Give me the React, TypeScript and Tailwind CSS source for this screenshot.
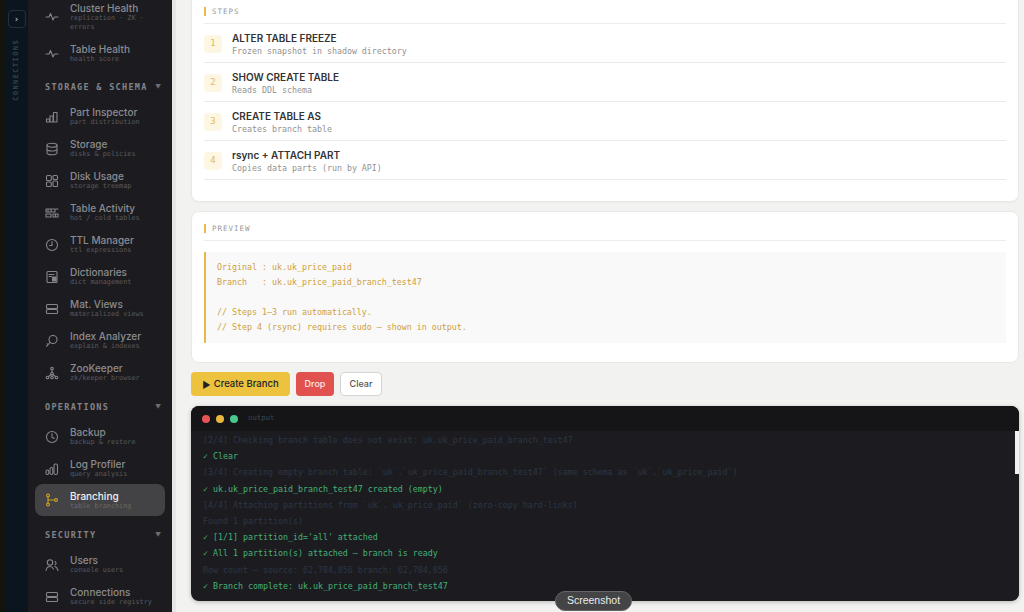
import React from "react";

const sans = "font-['Inter','Noto_Sans',sans-serif]";
const mono = "font-['DejaVu_Sans_Mono','Liberation_Mono',monospace]";

type IconProps = { children: React.ReactNode; color?: string };
function Ico({ children, color = "#85858a" }: IconProps) {
  return (
    <svg width="14" height="14" viewBox="0 0 14 14" fill="none" stroke={color} strokeWidth="1.1" strokeLinecap="round" strokeLinejoin="round" className="shrink-0">
      {children}
    </svg>
  );
}

const icons: Record<string, React.ReactNode> = {
  pulse: <Ico><path d="M1 7h3l1.5-3.5L8 10l1.5-3H13" /></Ico>,
  bars: <Ico><path d="M1.5 12V9h3v3zM5 12V6h3v6zM8.5 12V2.5h3.5V12z" /></Ico>,
  db: <Ico><ellipse cx="7" cy="3.2" rx="5" ry="2" /><path d="M2 3.2v7.6c0 1.1 2.2 2 5 2s5-.9 5-2V3.2M2 7c0 1.1 2.2 2 5 2s5-.9 5-2" /></Ico>,
  grid: <Ico><rect x="1.5" y="1.5" width="4.8" height="5" rx="1" /><rect x="8" y="1.5" width="4.5" height="4" rx="1" /><rect x="1.5" y="8" width="4.8" height="4.5" rx="1" /><rect x="8" y="7" width="4.5" height="5.5" rx="1" /></Ico>,
  activity: <Ico><path d="M1 3h9v3H1zM11 3h2M1 8h5v3H1zM8 8h5v3H8zM3 3v3M6 3v3M10.500 8v3" /></Ico>,
  clockDown: <Ico><circle cx="7" cy="7" r="5.500" /><path d="M7 3.500V7.500H4.500" /></Ico>,
  dict: <Ico><rect x="2" y="1.500" width="10" height="11" rx="1" /><path d="M4 4.500h5M4 6.500h2.500" /><rect x="7.500" y="7" width="3.500" height="4" fill="#85858a" /></Ico>,
  stack: <Ico><rect x="1.500" y="2.500" width="11" height="4" rx="1" /><rect x="1.500" y="7.500" width="11" height="4" rx="1" /></Ico>,
  search: <Ico><circle cx="8" cy="5.500" r="4" /><path d="M5 8.500L1.500 12.500M3 10h-1" /></Ico>,
  tree: <Ico><circle cx="7" cy="2.500" r="1.300" /><circle cx="7" cy="7.500" r="1.300" /><circle cx="2.500" cy="11.500" r="1.300" /><circle cx="7" cy="11.500" r="1.300" /><circle cx="11.500" cy="11.500" r="1.300" /><path d="M7 4v2M6 8.500l-2.500 2M8 8.500l2.500 2M7 9v1" /></Ico>,
  clock: <Ico><circle cx="7" cy="7" r="5.500" /><path d="M7 3.500V7.200L9.200 8.500" /></Ico>,
  logbars: <Ico><rect x="1" y="8" width="2.800" height="4.500" rx="1.400" /><rect x="5" y="5.500" width="2.800" height="7" rx="1.400" /><rect x="9" y="2" width="3.500" height="10.500" rx="1.400" /></Ico>,
  branch: <Ico color="#c9a227"><circle cx="3" cy="2.500" r="1.400" /><circle cx="3" cy="11.500" r="1.400" /><circle cx="11" cy="7" r="1.400" /><path d="M3 4v6M3 7h6.500" /></Ico>,
  users: <Ico><circle cx="5" cy="4.500" r="2.700" /><path d="M1 12.500c.5-2.500 2-4 4-4s2.800 1 3.500 2.500M10 3.500a2 2 0 010 3.500M10 8.500c1.500.5 2.500 2 3 4" /></Ico>,
};

type Item = { icon: string; title: string; sub: string[]; active?: boolean; cut?: boolean };

function NavItem({ icon, title, sub, active }: Item) {
  return (
    <div className={`mx-[7px] w-[130px] flex items-center gap-[11px] pl-[10px] rounded-lg ${active ? "bg-[#434345] h-[32px]" : ""}`}>
      {icons[icon]}
      <div className="min-w-0">
        <div className={`${sans} text-[10px] leading-[12px] font-medium whitespace-nowrap ${active ? "text-[#f0f0f0]" : "text-[#8b8b8f]"}`}>{title}</div>
        {sub.map((s) => (
          <div key={s} className={`${mono} text-[6.800px] leading-[9px] whitespace-nowrap ${active ? "text-[#69696c]" : "text-[#5a5a5e]"}`}>{s}</div>
        ))}
      </div>
    </div>
  );
}

function Section({ title, className }: { title: string; className: string }) {
  return (
    <div className={`flex items-center justify-between pl-[17px] pr-[11px] ${className}`}>
      <span className={`${mono} text-[8.500px] leading-[10px] font-bold tracking-[1.300px] text-[#848488]`}>{title}</span>
      <span className="text-[6px] leading-none text-[#6f6f73]">▼</span>
    </div>
  );
}

const steps = [
  ["1", "ALTER TABLE FREEZE", "Frozen snapshot in shadow directory"],
  ["2", "SHOW CREATE TABLE", "Reads DDL schema"],
  ["3", "CREATE TABLE AS", "Creates branch table"],
  ["4", "rsync + ATTACH PART", "Copies data parts (run by API)"],
];

function Heading({ title }: { title: string }) {
  return (
    <div className="flex items-center gap-[6px] h-[7px]">
      <span className="w-[2px] h-[9px] bg-[#eab94a]" />
      <span className={`${mono} text-[7.500px] leading-[9px] tracking-[1px] font-medium text-[#9a9a9a]`}>{title}</span>
    </div>
  );
}

const logs: [string, boolean][] = [
  ["[2/4] Checking branch table does not exist: uk.uk_price_paid_branch_test47", false],
  ["✓ Clear", true],
  ["[3/4] Creating empty branch table: `uk`.`uk_price_paid_branch_test47` (same schema as `uk`.`uk_price_paid`)", false],
  ["✓ uk.uk_price_paid_branch_test47 created (empty)", true],
  ["[4/4] Attaching partitions from `uk`.`uk_price_paid` (zero-copy hard-links)", false],
  ["Found 1 partition(s)", false],
  ["✓ [1/1] partition_id='all' attached", true],
  ["✓ All 1 partition(s) attached — branch is ready", true],
  ["Row count — source: 62,784,856 branch: 62,784,856", false],
  ["✓ Branch complete: uk.uk_price_paid_branch_test47", true],
];

export default function App() {
  return (
    <div className={`relative w-[1024px] h-[612px] overflow-hidden flex bg-[#f2f2f0] ${sans}`}>
      {/* connection rail */}
      <div className="w-[5px] bg-[#14140f] shrink-0" />
      <div className="w-[23px] shrink-0 bg-[#0b151f] flex flex-col items-center pt-[10px]">
        <div className="w-[18px] h-[18px] rounded-[4px] border border-[#24303a] flex items-center justify-center">
          <span className={`${mono} text-[9px] leading-none font-bold text-[#a0a8ae]`}>›</span>
        </div>
        <div className={`${mono} mt-[11px] text-[7px] leading-[9px] tracking-[1.400px] font-bold text-[#33424e] [writing-mode:vertical-rl] rotate-180`}>CONNECTIONS</div>
      </div>

      {/* sidebar */}
      <div className="w-[144px] shrink-0 bg-[#1c1c20] overflow-hidden pt-[2px]">
        <NavItem icon="pulse" title="Cluster Health" sub={["replication · ZK ·", "errors"]} />
        <div className="h-[11px]" />
        <NavItem icon="pulse" title="Table Health" sub={["health score"]} />
        <Section title="STORAGE & SCHEMA" className="mt-[18px] mb-[14px]" />
        <div className="flex flex-col gap-[11px]">
          <NavItem icon="bars" title="Part Inspector" sub={["part distribution"]} />
          <NavItem icon="db" title="Storage" sub={["disks & policies"]} />
          <NavItem icon="grid" title="Disk Usage" sub={["storage treemap"]} />
          <NavItem icon="activity" title="Table Activity" sub={["hot / cold tables"]} />
          <NavItem icon="clockDown" title="TTL Manager" sub={["ttl expressions"]} />
          <NavItem icon="dict" title="Dictionaries" sub={["dict management"]} />
          <NavItem icon="stack" title="Mat. Views" sub={["materialized views"]} />
          <NavItem icon="search" title="Index Analyzer" sub={["explain & indexes"]} />
          <NavItem icon="tree" title="ZooKeeper" sub={["zk/keeper browser"]} />
        </div>
        <Section title="OPERATIONS" className="mt-[19px] mb-[14px]" />
        <div className="flex flex-col gap-[11px]">
          <NavItem icon="clock" title="Backup" sub={["backup & restore"]} />
          <NavItem icon="logbars" title="Log Profiler" sub={["query analysis"]} />
        </div>
        <div className="mt-[5px]"><NavItem icon="branch" title="Branching" sub={["table branching"]} active /></div>
        <Section title="SECURITY" className="mt-[14px] mb-[14px]" />
        <div className="flex flex-col gap-[11px]">
          <NavItem icon="users" title="Users" sub={["console users"]} />
          <NavItem icon="stack" title="Connections" sub={["secure side registry"]} />
        </div>
      </div>

      {/* sidebar scrollbar */}
      <div className="w-[4px] shrink-0 bg-[#e6e6e6] flex flex-col justify-end">
        <div className="h-[16px]" />
      </div>

      {/* main */}
      <div className="flex-1 min-w-0 pl-[15px] pr-[5px] pb-0">
        <div className="bg-white rounded-b-lg border border-t-0 border-[#e8e8e6] h-[202px] px-[12px] pt-[8px] shadow-[0_1px_2px_rgba(0,0,0,0.03)]">
          <Heading title="STEPS" />
          <div className="mt-[8px] border-t border-[#ececec]">
            {steps.map(([n, t, d]) => (
              <div key={n} className="flex items-center gap-[10px] h-[39px] pt-[2px] border-b border-[#e9e9e9]">
                <div className={`${mono} w-[18px] h-[18px] rounded-[4px] bg-[#fdf6e3] flex items-center justify-center text-[9px] font-medium text-[#e8b84a]`}>{n}</div>
                <div>
                  <div className={`${sans} text-[10px] leading-[13px] font-semibold text-[#333333]`}>{t}</div>
                  <div className={`${mono} text-[8.300px] leading-[12px] text-[#929292]`}>{d}</div>
                </div>
              </div>
            ))}
          </div>
        </div>

        <div className="mt-[9px] bg-white rounded-lg border border-[#e8e8e6] h-[152px] px-[12px] pt-[13px]">
          <Heading title="PREVIEW" />
          <div className="mt-[8px] border-t border-[#ececec]" />
          <div className={`${mono} mt-[11px] h-[91px] border-l-[2px] border-[#e8b84a] bg-[#f9f9f9] pl-[11px] pt-[8px] text-[8.300px] leading-[15px] text-[#d0a040] whitespace-pre`}>
            {"Original : uk.uk_price_paid\nBranch   : uk.uk_price_paid_branch_test47\n\n// Steps 1–3 run automatically.\n// Step 4 (rsync) requires sudo — shown in output."}
          </div>
        </div>

        <div className="mt-[9px] flex gap-[6px] h-[24px]">
          <button className={`${sans} w-[99px] rounded-[4px] bg-[#ecc23f] text-[#222222] text-[9.500px] font-medium flex items-center justify-center gap-[3px]`}><span className="text-[9px] leading-none">▶</span>Create Branch</button>
          <button className={`${sans} w-[38px] rounded-[4px] bg-[#e15150] text-[#ffe9e6] text-[9px] font-medium`}>Drop</button>
          <button className={`${sans} w-[42px] rounded-[4px] bg-white border border-[#d4d4d4] text-[#555555] text-[9px] font-medium`}>Clear</button>
        </div>

        <div className="mt-[10px] h-[195px] rounded-lg overflow-hidden bg-[#1c1c20] flex flex-col shadow-[0_1px_4px_rgba(0,0,0,0.25)]">
          <div className="h-[25px] shrink-0 bg-[#151517] flex items-center pl-[11px] gap-[6px]">
            <span className="w-[8px] h-[8px] rounded-full bg-[#e65555]" />
            <span className="w-[8px] h-[8px] rounded-full bg-[#eab83c]" />
            <span className="w-[8px] h-[8px] rounded-full bg-[#48c78e]" />
            <span className={`${mono} ml-[4px] text-[7.300px] text-[#3a4658]`}>output</span>
          </div>
          <div className="flex flex-1 min-h-0">
            <div className={`${mono} flex-1 min-w-0 pl-[12px] pt-[1px] text-[8.300px] leading-[16.200px] whitespace-pre`}>
              {logs.map(([l, ok]) => (
                <div key={l} className={ok ? "text-[#45b078]" : "text-[#2b3645]"}>{l}</div>
              ))}
            </div>
            <div className="w-[4px] shrink-0 bg-[#1c1c20] flex flex-col">
              <div className="h-[43px] bg-[#f2f2f2]" />
            </div>
          </div>
        </div>
      </div>

      {/* screenshot pill overlay */}
      <div className="absolute left-[555px] top-[591px] h-[20px] w-[77px] rounded-full bg-[#444446] border border-[#666668] flex items-center justify-center text-[10.500px] text-[#ececec] font-['Liberation_Sans',sans-serif]">Screenshot</div>
    </div>
  );
}
